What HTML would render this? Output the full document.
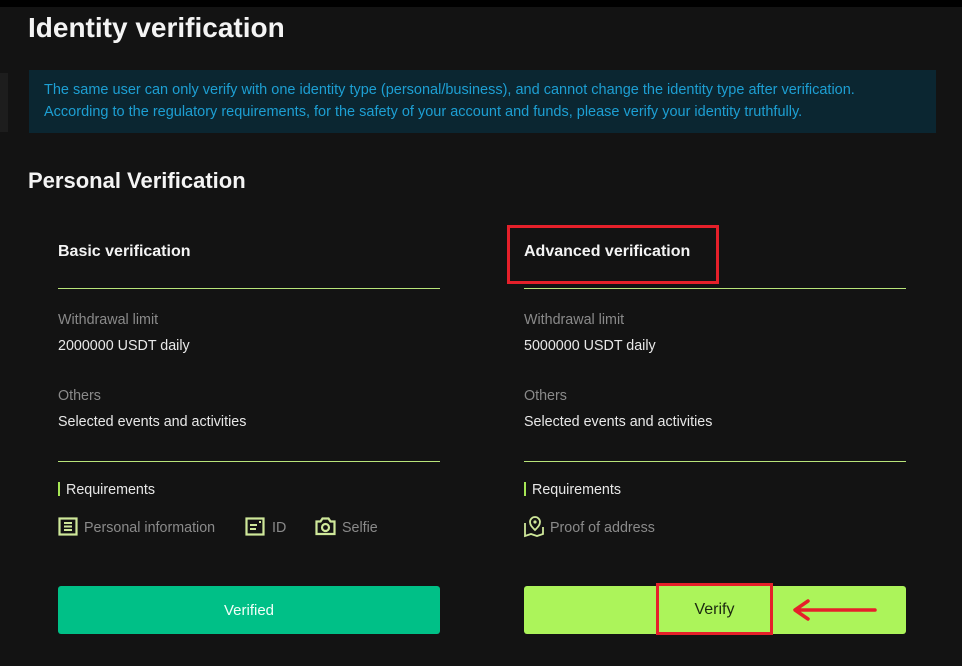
<!DOCTYPE html>
<html><head><meta charset="utf-8"><style>
*{margin:0;padding:0;box-sizing:border-box}
body{width:962px;height:666px;background:#131313;font-family:"Liberation Sans",sans-serif;position:relative;overflow:hidden;color:#fff}
.a{position:absolute;white-space:nowrap}
.line{position:absolute;height:1px;background:#b9e57a}
.lbl{color:#8a8a8a;font-size:14.3px}
.val{color:#e8e8e8;font-size:14.3px}
.req{color:#8a8a8a;font-size:14.3px}
</style></head><body>
<div class="a" style="left:0;top:0;width:962px;height:7px;background:#000"></div>
<div class="a" style="left:28px;top:12px;font-size:28px;font-weight:bold;color:#f4f4f4">Identity verification</div>
<div class="a" style="left:0;top:73px;width:8px;height:59px;background:#1d1d1d"></div>
<div class="a" style="left:29px;top:70px;width:907px;height:63px;background:#0b2631"></div>
<div class="a" style="left:44px;top:79px;font-size:14.5px;color:#1d9fd3;line-height:22px">The same user can only verify with one identity type (personal/business), and cannot change the identity type after verification.<br>According to the regulatory requirements, for the safety of your account and funds, please verify your identity truthfully.</div>
<div class="a" style="left:28px;top:168px;font-size:22px;font-weight:bold;color:#f4f4f4">Personal Verification</div>

<div class="a" style="left:58px;top:243px;font-size:16px;font-weight:bold;color:#f4f4f4">Basic verification</div>
<div class="line" style="left:58px;top:288px;width:382px"></div>
<div class="a lbl" style="left:58px;top:312px">Withdrawal limit</div>
<div class="a val" style="left:58px;top:338px">2000000 USDT daily</div>
<div class="a lbl" style="left:58px;top:388px">Others</div>
<div class="a val" style="left:58px;top:414px">Selected events and activities</div>
<div class="line" style="left:58px;top:461px;width:382px"></div>
<div class="a" style="left:58px;top:482px;width:2px;height:14px;background:#a6e655"></div>
<div class="a val" style="left:66px;top:482px">Requirements</div>
<svg class="a" style="left:58px;top:517px" width="20" height="19" viewBox="0 0 20 19"><rect x="1.5" y="1.5" width="17" height="16" fill="none" stroke="#cfe89a" stroke-width="2.2"/><path d="M6 6h8M6 9.5h8M6 13h8" stroke="#cfe89a" stroke-width="2"/></svg>
<div class="a req" style="left:84px;top:520px">Personal information</div>
<svg class="a" style="left:245px;top:517px" width="20" height="19" viewBox="0 0 20 19"><rect x="1.5" y="1.5" width="17" height="16" fill="none" stroke="#cfe89a" stroke-width="2.2"/><path d="M5 8h7M5 12h6M14 5h2" stroke="#cfe89a" stroke-width="2"/></svg>
<div class="a req" style="left:272px;top:520px">ID</div>
<svg class="a" style="left:315px;top:516px" width="21" height="20" viewBox="0 0 21 20"><path d="M1.5 5.5h4l2-3h6l2 3h4v12.5h-18z" fill="none" stroke="#cfe89a" stroke-width="2.2"/><circle cx="10.5" cy="11.5" r="3.5" fill="none" stroke="#cfe89a" stroke-width="2.2"/></svg>
<div class="a req" style="left:342px;top:520px">Selfie</div>
<div class="a" style="left:58px;top:586px;width:382px;height:48px;background:#00c087;border-radius:3px;font-size:15px;color:#f2fff8;text-align:center;line-height:49px">Verified</div>

<div class="a" style="left:507px;top:225px;width:212px;height:59px;border:3px solid #e5202a"></div>
<div class="a" style="left:524px;top:243px;font-size:16px;font-weight:bold;color:#f4f4f4">Advanced verification</div>
<div class="line" style="left:524px;top:288px;width:382px"></div>
<div class="a lbl" style="left:524px;top:312px">Withdrawal limit</div>
<div class="a val" style="left:524px;top:338px">5000000 USDT daily</div>
<div class="a lbl" style="left:524px;top:388px">Others</div>
<div class="a val" style="left:524px;top:414px">Selected events and activities</div>
<div class="line" style="left:524px;top:461px;width:382px"></div>
<div class="a" style="left:524px;top:482px;width:2px;height:14px;background:#a6e655"></div>
<div class="a val" style="left:532px;top:482px">Requirements</div>
<svg class="a" style="left:523px;top:515px" width="22" height="23" viewBox="0 0 22 23"><path d="M2 8v13l6-2 6 2 6-2V12" fill="none" stroke="#cfe89a" stroke-width="1.8"/><path d="M12 15c-3-3-5-5-5-8a5 5 0 0 1 10 0c0 3-2 5-5 8z" fill="none" stroke="#cfe89a" stroke-width="1.8"/><circle cx="12" cy="7" r="1.6" fill="#cfe89a"/></svg>
<div class="a req" style="left:550px;top:520px">Proof of address</div>
<div class="a" style="left:524px;top:586px;width:382px;height:48px;background:#acf45a;border-radius:3px"></div>
<div class="a" style="left:656px;top:583px;width:117px;height:52px;border:3px solid #e5202a;font-size:16px;color:#1c2a10;text-align:center;line-height:48px">Verify</div>
<svg class="a" style="left:790px;top:598px" width="88" height="24" viewBox="0 0 88 24"><path d="M85 12H6M18 3L5 12l13 9" fill="none" stroke="#e5202a" stroke-width="3.5" stroke-linecap="round" stroke-linejoin="round"/></svg>
</body></html>
